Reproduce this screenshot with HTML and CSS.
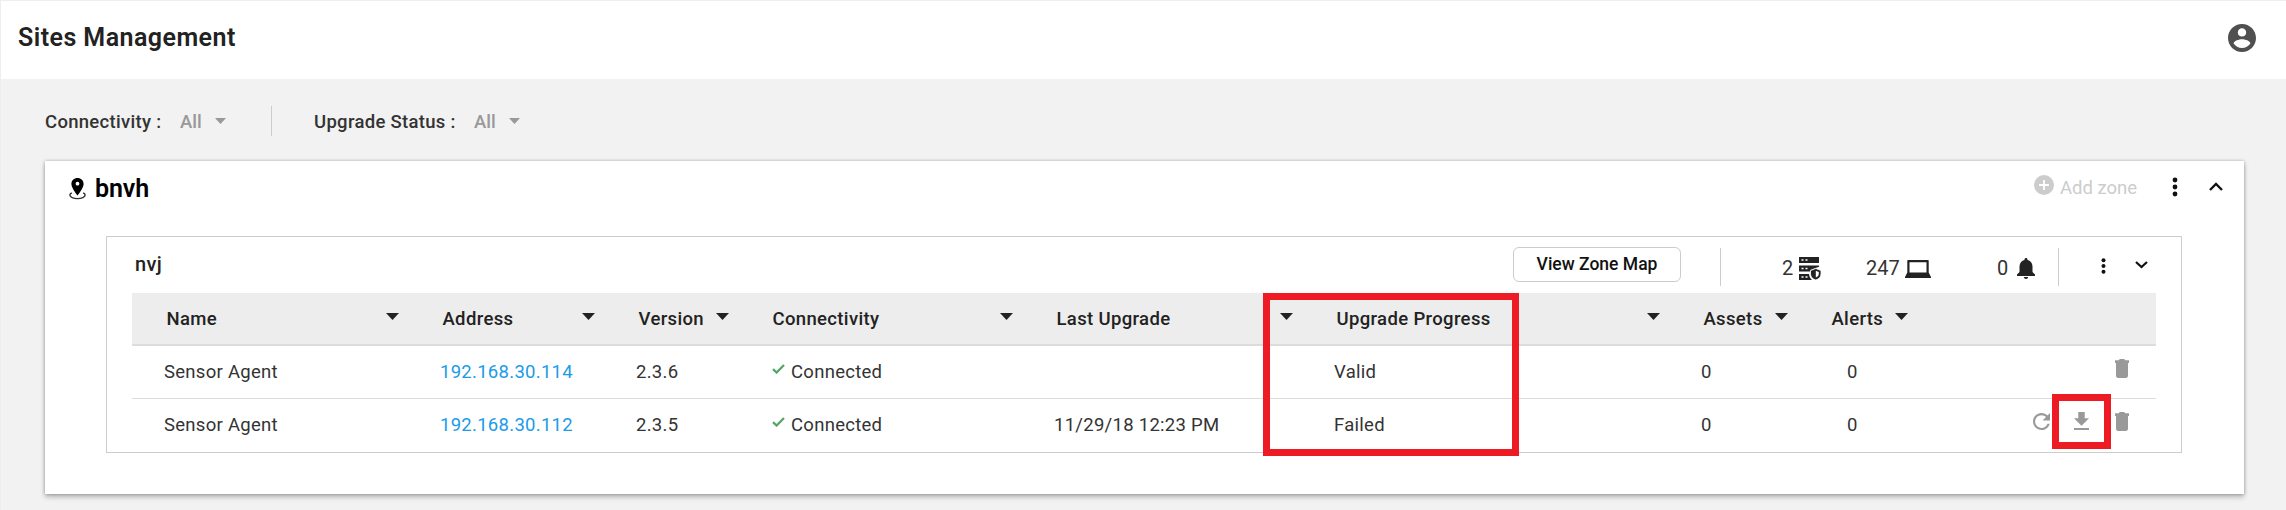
FILE: index.html
```html
<!DOCTYPE html>
<html lang="en">
<head>
<meta charset="utf-8">
<title>Sites Management</title>
<link rel="stylesheet" href="styles.css">
</head>
<body>
<svg class="defs" width="0" height="0">
  <symbol id="caret" viewBox="0 0 13 7"><path d="M0 0h13L6.500 7z"/></symbol>
  <symbol id="dots" viewBox="0 0 6 20"><circle cx="3" cy="3" r="2.400"/><circle cx="3" cy="10" r="2.400"/><circle cx="3" cy="17" r="2.400"/></symbol>
  <symbol id="check" viewBox="0 0 13 10"><path d="M1 5.200 4.600 8.500 12 1" fill="none" stroke="#55a567" stroke-width="2.300"/></symbol>
  <symbol id="trash" viewBox="0 0 14 19"><path d="M0 1.200h3.800L4.800 0h4.400l1 1.200H14v2.800H0zM1 4h12v12.800c0 1.200-.9 2.200-2 2.200H3c-1.100 0-2-1-2-2.200z"/></symbol>
</svg>
<div class="page">
  <header class="topbar">
    <h1 class="title">Sites Management</h1>
    <svg class="avatar" viewBox="2 2 20 20"><path d="M12 2C6.480 2 2 6.480 2 12s4.480 10 10 10 10-4.480 10-10S17.520 2 12 2zm0 3c1.660 0 3 1.340 3 3s-1.340 3-3 3-3-1.340-3-3 1.340-3 3-3zm0 14.200c-2.500 0-4.710-1.280-6-3.220.03-1.990 4-3.080 6-3.080 1.990 0 5.970 1.090 6 3.080-1.290 1.940-3.500 3.220-6 3.220z"/></svg>
  </header>

  <div class="filters">
    <span class="filter-label f-conn">Connectivity :</span>
    <span class="filter-value">All</span>
    <svg class="filter-caret"><use href="#caret"/></svg>
    <span class="filter-divider"></span>
    <span class="filter-label f-upg">Upgrade Status :</span>
    <span class="filter-value">All</span>
    <svg class="filter-caret"><use href="#caret"/></svg>
  </div>

  <section class="site">
    <div class="site-head">
      <svg class="pin" viewBox="0 0 17 22"><path fill-rule="evenodd" d="M8.500 0C5 0 2.400 2.600 2.400 5.900c0 4 6.100 11.600 6.100 11.600s6.100-7.600 6.100-11.600C14.600 2.600 12 0 8.500 0zm0 3.800a1.900 1.900 0 1 1 0 3.800 1.900 1.900 0 0 1 0-3.800z"/><path d="M2.800 15C1.500 15.500 .9 16.200 .9 17c0 2 3.400 3.600 7.600 3.600s7.600-1.600 7.600-3.600c0-.8-.6-1.500-1.900-2" fill="none" stroke="#333" stroke-width="1.400"/></svg>
      <h2 class="site-name">bnvh</h2>
      <svg class="plus" viewBox="0 0 20 20"><circle cx="10" cy="10" r="10" fill="#ccc"/><path d="M10 5v10M5 10h10" stroke="#fff" stroke-width="1.800"/></svg>
      <span class="add-zone">Add zone</span>
      <svg class="site-dots"><use href="#dots"/></svg>
      <svg class="site-chevron" viewBox="0 0 14 9"><path d="M1 8 7 2l6 6" fill="none" stroke="#111" stroke-width="2.300"/></svg>
    </div>

    <div class="zone">
      <div class="zone-head">
        <h3 class="zone-name">nvj</h3>
        <button class="map-button">View Zone Map</button>
        <span class="divider d1"></span>
        <span class="count c-servers">2</span>
        <svg class="i-server" viewBox="0 0 22 23"><path fill="#222" d="M0 0h20v6H0zM0 8.500h20v1.300l-3.500 1.200-5 2-.5 1.500H0zM0 17h10c.2 2.500 1.200 4.400 3 6H0z"/><path stroke="#fff" stroke-width="1.600" d="M2.500 3h2M6.500 3h2M2.500 11.500h2M6.500 11.500h2M2.500 20h2M6.500 20h2"/><path fill="#222" stroke="#fff" stroke-width=".8" d="M16.800 11.500 22 13.500v3.500c0 3-2 5-5.200 6-3.200-1-5.300-3-5.300-6v-3.500z"/><path fill="#fff" d="M16.800 13.800v6.800c2-.8 3-2 3-3.800v-1.800z"/></svg>
        <span class="count c-assets">247</span>
        <svg class="i-laptop" viewBox="0 0 26 18"><path fill="#222" fill-rule="evenodd" d="M3.300 0h19.400c.6 0 1 .4 1 1v11.500L26 17v1H0v-1l2.300-4.500V1c0-.6.4-1 1-1zM4.500 2.200v10.300h17V2.200z"/></svg>
        <span class="count c-alerts">0</span>
        <svg class="i-bell" viewBox="0 0 18 21"><path fill="#222" d="M9 0c.9 0 1.500.6 1.500 1.500v.6c3 .7 5 3.200 5 6.400v5.500L18 16.500V18H0v-1.500L2.500 14V8.500c0-3.200 2-5.700 5-6.400v-.6C7.500.6 8.100 0 9 0zM6.900 19h4.200c0 1.100-.9 2-2.100 2s-2.100-.9-2.100-2z"/></svg>
        <span class="divider d2"></span>
        <svg class="zone-dots"><use href="#dots"/></svg>
        <svg class="zone-chevron" viewBox="0 0 13 8"><path d="m1 1 5.500 5L12 1" fill="none" stroke="#111" stroke-width="2.200"/></svg>
      </div>

      <div class="table">
        <div class="row head">
          <div class="th"><span>Name</span><svg class="caret"><use href="#caret"/></svg></div>
          <div class="th"><span>Address</span><svg class="caret"><use href="#caret"/></svg></div>
          <div class="th"><span>Version</span><svg class="caret"><use href="#caret"/></svg></div>
          <div class="th"><span>Connectivity</span><svg class="caret"><use href="#caret"/></svg></div>
          <div class="th"><span>Last Upgrade</span><svg class="caret"><use href="#caret"/></svg></div>
          <div class="th"><span>Upgrade Progress</span><svg class="caret"><use href="#caret"/></svg></div>
          <div class="th"><span>Assets</span><svg class="caret"><use href="#caret"/></svg></div>
          <div class="th"><span>Alerts</span><svg class="caret"><use href="#caret"/></svg></div>
          <div></div>
        </div>
        <div class="row body first">
          <div class="td">Sensor Agent</div>
          <div class="td link">192.168.30.114</div>
          <div class="td">2.3.6</div>
          <div class="td"><svg class="check"><use href="#check"/></svg><span>Connected</span></div>
          <div class="td"></div>
          <div class="td">Valid</div>
          <div class="td">0</div>
          <div class="td alerts">0</div>
          <div class="actions"><svg class="trash"><use href="#trash"/></svg></div>
        </div>
        <div class="row body">
          <div class="td">Sensor Agent</div>
          <div class="td link">192.168.30.112</div>
          <div class="td">2.3.5</div>
          <div class="td"><svg class="check"><use href="#check"/></svg><span>Connected</span></div>
          <div class="td">11/29/18 12:23 PM</div>
          <div class="td">Failed</div>
          <div class="td">0</div>
          <div class="td alerts">0</div>
          <div class="actions">
            <svg class="refresh" viewBox="4 4 16 16"><path d="M17.650 6.350C16.200 4.900 14.210 4 12 4c-4.420 0-7.990 3.580-7.990 8s3.570 8 7.990 8c3.730 0 6.840-2.550 7.730-6h-2.080c-.82 2.330-3.040 4-5.650 4-3.310 0-6-2.690-6-6s2.690-6 6-6c1.660 0 3.140.69 4.220 1.780L13 11h7V4l-2.350 2.350z"/></svg>
            <svg class="download" viewBox="5 3 14 17" preserveAspectRatio="none"><path d="M19 9h-4V3H9v6H5l7 7 7-7zM5 18v2h14v-2H5z"/></svg>
            <svg class="trash"><use href="#trash"/></svg>
          </div>
        </div>
      </div>
    </div>
  </section>
  <div class="mark mark-progress"></div>
  <div class="mark mark-download"></div>
</div>
</body>
</html>
```
FILE: styles.css
```css
* { box-sizing: border-box; }
body { margin: 0; font-family: Roboto, "Liberation Sans", sans-serif; color: #222; background: #f2f2f2; }
svg { display: block; flex: none; }
h1, h2, h3 { margin: 0; font-weight: 500; }
span, h1, h2, h3, .td { white-space: nowrap; }
.defs { position: absolute; }

.page { position: relative; width: 2286px; height: 510px; overflow: hidden; border-top: 1px solid #efeeea; border-left: 1px solid #efeeea; }

.topbar { display: flex; justify-content: space-between; height: 78px; padding: 22px 30px 0 17px; background: #fff; }
.title { font-size: 25px; line-height: 30px; font-weight: 600; letter-spacing: .45px; }
.avatar { width: 28px; height: 28px; margin-top: 1px; fill: #505050; }

.filters { display: flex; height: 82px; padding: 27px 0 0 44px; align-items: flex-start; }
.filter-label { margin-top: 1px; font-size: 18.500px; line-height: 30px; font-weight: 500; letter-spacing: .3px; color: #333; }
.f-conn { width: 135px; }
.f-upg { width: 160px; }
.filter-value { width: 35px; margin-top: 1px; font-size: 18.500px; line-height: 30px; color: #999; font-weight: 500; }
.filter-caret { width: 11px; height: 6px; margin-top: 12px; fill: #999; }
.filter-divider { width: 1px; height: 30px; margin: 0 42px 0 45px; background: #ccc; }

.site { width: 2199px; height: 333px; margin-left: 44px; background: #fff; box-shadow: 0 3px 5px rgba(0,0,0,.25), 0 0 3px rgba(0,0,0,.25); }
.site-head { display: flex; height: 75px; padding-left: 24px; align-items: flex-start; }
.pin { width: 17px; height: 22px; margin-top: 17px; fill: #000; }
.site-name { margin: 13px auto 0 9px; font-size: 25px; line-height: 30px; font-weight: 600; letter-spacing: -.1px; color: #000; }
.plus { width: 20px; height: 20px; margin: 14px 6px 0 0; }
.add-zone { width: 112px; margin-top: 12px; font-size: 18.500px; line-height: 30px; color: #ccc; }
.site-dots { width: 6px; height: 20px; margin: 16px 31px 0 0; fill: #111; }
.site-chevron { width: 14px; height: 9px; margin: 21px 21px 0 0; }

.zone { width: 2076px; height: 217px; margin-left: 61px; padding-left: 25px; border: 1px solid #ccc; }
.zone-head { display: flex; height: 56px; align-items: flex-start; }
.zone-name { width: 1381px; padding-left: 3px; margin-top: 12px; font-size: 20px; line-height: 30px; letter-spacing: .3px; }
.map-button { width: 168px; height: 35px; margin-top: 10px; padding: 0 0 1px; border: 1px solid #ccc; border-radius: 6px; background: #fff; font: 500 17.500px Roboto, sans-serif; color: #111; white-space: nowrap; }
.divider { width: 1px; height: 38px; margin-top: 11px; background: #ccc; }
.d1 { margin-left: 39px; }
.count { margin-top: 16px; font-size: 20px; line-height: 30px; color: #333; }
.c-servers { width: 17px; margin-left: 61px; }
.i-server { width: 22px; height: 23px; margin-top: 20px; }
.c-assets { width: 39px; margin-left: 45px; }
.i-laptop { width: 26px; height: 18px; margin-top: 23px; }
.c-alerts { width: 20px; margin-left: 66px; }
.i-bell { width: 18px; height: 21px; margin-top: 21px; }
.d2 { margin-left: 23px; }
.zone-dots { width: 5px; height: 18px; margin: 20px 29px 0 42px; fill: #111; }
.zone-chevron { width: 13px; height: 8px; margin-top: 24px; }

.table { width: 2024px; }
.row { display: grid; grid-template-columns: 276px 196px 134px 284px 280px 367px 128px 120px 239px; }
.head { height: 53px; background: #ededed; border-bottom: 2px solid #dcdcdc; }
.th { display: flex; justify-content: space-between; padding: 10px 9px 0 34.500px; font-size: 18.500px; line-height: 30px; font-weight: 500; }
.th span { margin-top: 1px; letter-spacing: .35px; }
.caret { width: 13px; height: 7px; margin-top: 10px; fill: #222; }
.body { height: 53px; }
.first { border-bottom: 1px solid #ddd; }
.td { display: flex; padding: 11px 0 0 32px; font-size: 18.500px; line-height: 30px; letter-spacing: .28px; color: #333; }
.link { color: #1b9be8; }
.check { width: 13px; height: 10px; margin: 7px 6px 0 2px; }
.td.alerts { padding-left: 50px; }
.actions { display: flex; justify-content: flex-end; padding: 13px 27px 0 0; fill: #999; }
.trash { width: 14px; height: 19px; }
.refresh { width: 17px; height: 17px; margin: 1px 24px 0 0; }
.download { width: 15px; height: 18px; margin-right: 26px; }

/* Highlight frames over the table */
.mark { position: absolute; border: 7px solid #ed1c24; }
.mark-progress { left: 1262px; top: 292px; width: 256px; height: 163px; }
.mark-download { left: 2051px; top: 393px; width: 59px; height: 55px; }
```
